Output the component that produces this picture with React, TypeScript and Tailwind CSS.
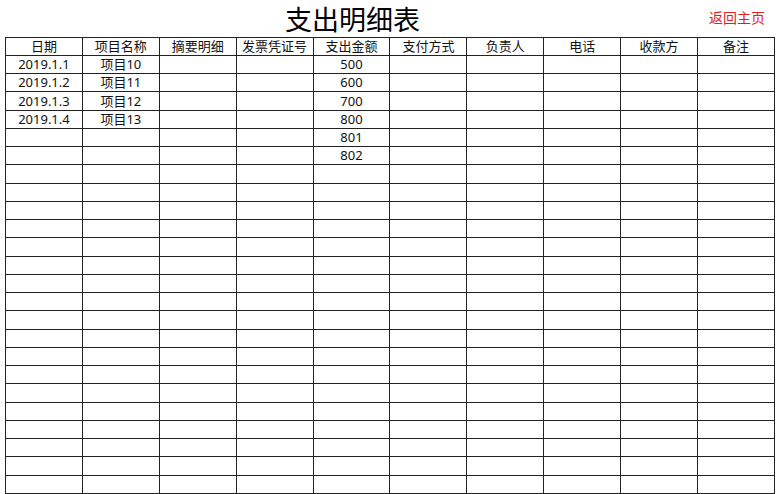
const headers = ["日期", "项目名称", "摘要明细", "发票凭证号", "支出金额", "支付方式", "负责人", "电话", "收款方", "备注"]

const filled: string[][] = [
  ["2019.1.1", "项目10", "", "", "500"],
  ["2019.1.2", "项目11", "", "", "600"],
  ["2019.1.3", "项目12", "", "", "700"],
  ["2019.1.4", "项目13", "", "", "800"],
  ["", "", "", "", "801"],
  ["", "", "", "", "802"],
]

const rows: string[][] = Array.from({ length: 26 }, (_, i) => {
  const r = filled[i] ?? []
  return headers.map((_, c) => r[c] ?? "")
})

const App = () => (
  <div className="min-h-screen bg-white text-[#111] font-['Noto_Sans','Noto_Sans_CJK_SC',sans-serif]">
    <div className="flex h-[36.6px] items-center">
      <h1 className="flex-1 text-center text-[27px] leading-none font-normal text-black pt-[2px]">支出明细表</h1>
      <a href="#" className="w-[75px] pl-[4px] pb-[2px] text-[14px] text-[#e02020] no-underline">返回主页</a>
    </div>
    <table className="ml-[5px] w-[770px] table-fixed border-collapse text-[13px] leading-none">
      <thead>
        <tr className="h-[18.3px]">
          {headers.map((h) => (
            <th key={h} className="border border-[#222] p-0 text-center font-normal">{h}</th>
          ))}
        </tr>
      </thead>
      <tbody>
        {rows.map((r, i) => (
          <tr key={i} className="h-[18.25px]">
            {r.map((v, c) => (
              <td key={c} className="border border-[#222] p-0 text-center">{v}</td>
            ))}
          </tr>
        ))}
      </tbody>
    </table>
  </div>
)

export default App
